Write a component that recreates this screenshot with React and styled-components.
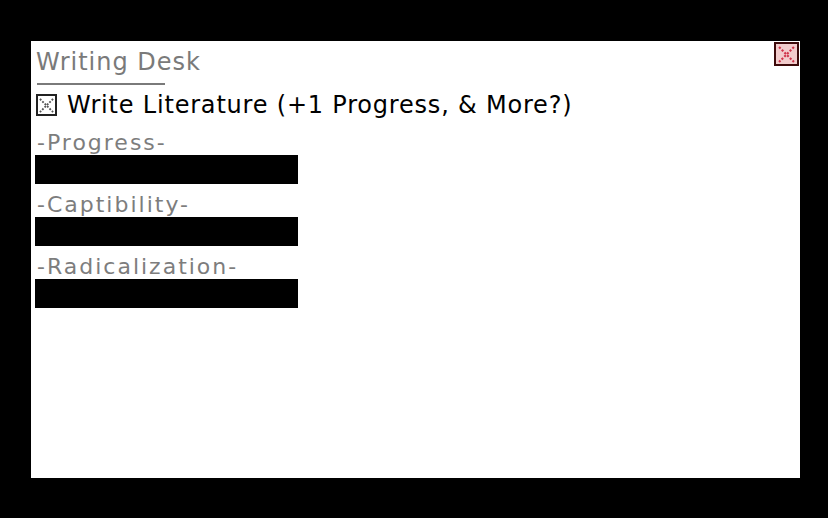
import React from "react";
import styled, { createGlobalStyle } from "styled-components";

const GlobalStyle = createGlobalStyle`
  html, body {
    margin: 0;
    padding: 0;
    background: #000;
  }
  body {
    width: 828px;
    height: 518px;
    overflow: hidden;
    font-family: "DejaVu Sans", "Liberation Sans", sans-serif;
  }
`;

const Screen = styled.div`
  width: 828px;
  height: 518px;
  box-sizing: border-box;
  padding: 41px 28px 40px 31px;
`;

const Panel = styled.div`
  position: relative;
  height: 100%;
  background: #fff;
  box-sizing: border-box;
  padding: 8px 4px 0 4px;
  display: flex;
  flex-direction: column;
  align-items: flex-start;
`;

const CloseButton = styled.button`
  position: absolute;
  top: 1px;
  right: 1px;
  width: 25px;
  height: 24px;
  padding: 0;
  box-sizing: border-box;
  border: 2px solid #3d0a0a;
  background: #f2cccc;
  display: flex;
  align-items: center;
  justify-content: center;
  cursor: pointer;
`;

const Title = styled.div`
  font-size: 24px;
  line-height: 26px;
  color: #7a7a7a;
  padding-left: 1px;
  letter-spacing: 1px;
`;

const Rule = styled.div`
  width: 128px;
  height: 2px;
  margin: 8px 0 0 2px;
  background: #7a7a7a;
`;

const ActionRow = styled.div`
  display: flex;
  align-items: center;
  gap: 10px;
  margin-top: 7px;
  padding-left: 1px;
`;

const CheckBox = styled.div`
  width: 21px;
  height: 22px;
  box-sizing: border-box;
  border: 2px solid #222;
  display: flex;
  align-items: center;
  justify-content: center;
`;

const ActionText = styled.div`
  font-size: 24px;
  line-height: 26px;
  color: #000;
  letter-spacing: 0.8px;
`;

const Stat = styled.div`
  display: flex;
  flex-direction: column;
  margin-top: ${(p) => (p.$first ? "12px" : "8px")};
`;

const StatLabel = styled.div`
  font-size: 22px;
  line-height: 25px;
  color: #7d7d7d;
  padding-left: 2px;
  letter-spacing: 2px;
`;

const Bar = styled.div`
  width: 263px;
  height: 29px;
  background: #000;
`;

function Cross({ color, size }) {
  return (
    <svg width={size} height={size} viewBox="0 0 16 16">
      <g stroke={color} strokeWidth="2" strokeDasharray="2 1.6" fill="none">
        <line x1="1" y1="1" x2="15" y2="15" />
        <line x1="15" y1="1" x2="1" y2="15" />
      </g>
    </svg>
  );
}

const stats = ["-Progress-", "-Captibility-", "-Radicalization-"];

export default function App() {
  return (
    <>
      <GlobalStyle />
      <Screen>
        <Panel>
          <CloseButton aria-label="Close">
            <Cross color="#d0344a" size={17} />
          </CloseButton>
          <Title>Writing Desk</Title>
          <Rule />
          <ActionRow>
            <CheckBox>
              <Cross color="#555" size={15} />
            </CheckBox>
            <ActionText>Write Literature (+1 Progress, &amp; More?)</ActionText>
          </ActionRow>
          {stats.map((s, i) => (
            <Stat key={s} $first={i === 0}>
              <StatLabel>{s}</StatLabel>
              <Bar />
            </Stat>
          ))}
        </Panel>
      </Screen>
    </>
  );
}
